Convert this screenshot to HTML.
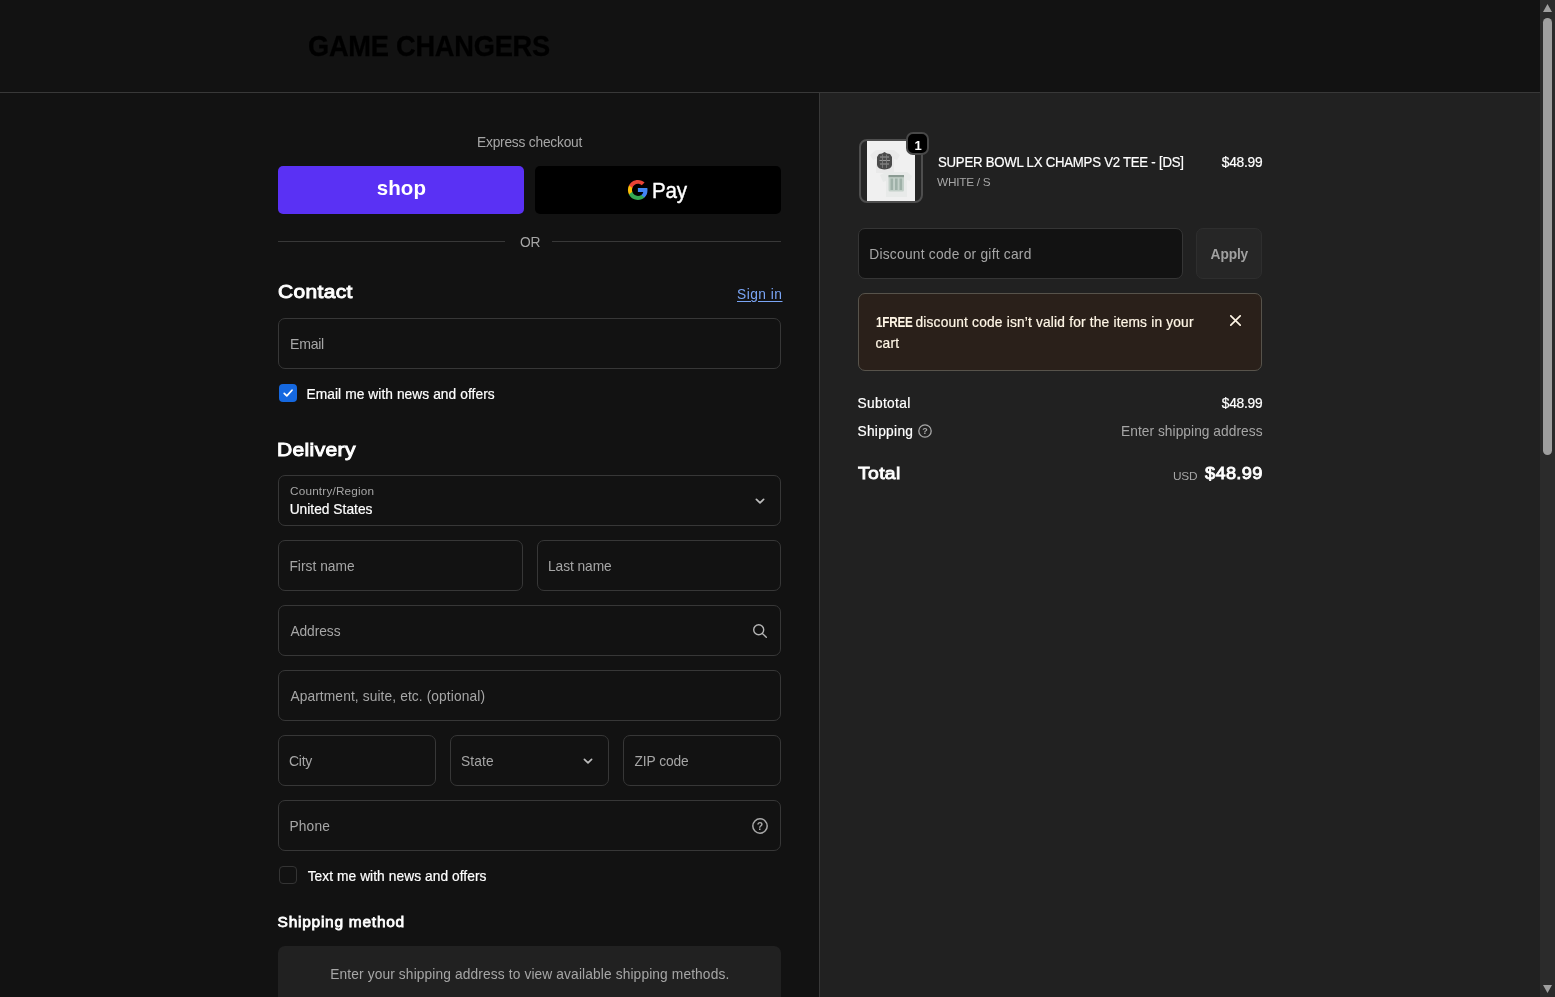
<!DOCTYPE html>
<html lang="en">
<head>
<meta charset="utf-8">
<title>Checkout - GAME CHANGERS</title>
<style>
*{box-sizing:border-box;margin:0;padding:0}
html,body{width:1555px;height:997px;overflow:hidden;background:#121212;font-family:"Liberation Sans",sans-serif;color:#fff}
body{position:relative}
.abs,.t,.box,svg{position:absolute}
.t{display:block;font-weight:400;white-space:nowrap;transform-origin:0 50%;line-height:20px;font-size:14px;color:#fff}
.t b{font-weight:700}
.box{border:1px solid #373737;border-radius:7px;height:51px}
#hdr{left:0;top:0;width:1540px;height:93px;background:#121212;border-bottom:1px solid #383838}
#side{left:819px;top:93px;width:721px;height:904px;background:#212121;border-left:1px solid #383838}
#sb{left:1540px;top:0;width:15px;height:997px;background:#2b2b2b}
#thumb{left:1543px;top:18px;width:9px;height:437px;background:#9f9f9f;border-radius:5px}
#txt{position:absolute;left:0;top:0;width:1555px;height:997px;will-change:transform}

</style>
</head>
<body>
<div id="txt">
<div class="abs" id="hdr"></div>
<div class="abs" id="side"></div>
<div class="abs" id="sb"></div>
<div class="abs" id="thumb"></div>
<svg style="left:1543px;top:4px" width="9" height="8" viewBox="0 0 9 8"><path d="M4.5 0 L9 8 H0 Z" fill="#9f9f9f"/></svg>
<svg style="left:1543px;top:985px" width="9" height="8" viewBox="0 0 9 8"><path d="M0 0 H9 L4.5 8 Z" fill="#9f9f9f"/></svg>

<!-- express buttons -->
<div class="abs" style="left:278px;top:166px;width:246px;height:48px;background:#5a31f4;border-radius:5px"></div>
<div class="abs" style="left:535px;top:166px;width:246px;height:48px;background:#000;border-radius:5px"></div>
<svg style="left:627.100px;top:179.100px" width="21.800" height="21.800" viewBox="0 0 48 48">
<path fill="#4285F4" d="M45.1 24.5c0-1.6-.1-3.100-.4-4.500H24v8.500h11.800c-.5 2.700-2.100 5.100-4.400 6.600v5.500h7.100c4.200-3.800 6.600-9.500 6.600-16.100z"/>
<path fill="#34A853" d="M24 46c5.900 0 10.900-2 14.500-5.300l-7.100-5.500c-2 1.300-4.500 2.100-7.400 2.100-5.700 0-10.500-3.800-12.300-9H4.400v5.700C8 41.100 15.400 46 24 46z"/>
<path fill="#FBBC05" d="M11.700 28.300c-.4-1.300-.7-2.800-.7-4.300s.3-2.900.7-4.300V14H4.400C2.900 17 2 20.400 2 24s.9 7 2.400 10l7.300-5.700z"/>
<path fill="#EA4335" d="M24 10.700c3.200 0 6.100 1.100 8.400 3.300l6.300-6.300C34.900 4.200 29.900 2 24 2 15.400 2 8 6.900 4.400 14l7.300 5.700c1.800-5.200 6.600-9 12.300-9z"/>
</svg>
<div class="abs" style="left:278px;top:241px;width:227px;height:1px;background:#383838"></div>
<div class="abs" style="left:552px;top:241px;width:229px;height:1px;background:#383838"></div>

<!-- form boxes -->
<div class="box" style="left:278px;top:318px;width:503px"></div>
<div class="abs" style="left:279px;top:384px;width:18px;height:18px;border-radius:4px;background:#1568e0"></div>
<svg style="left:282px;top:387px" width="12" height="12" viewBox="0 0 12 12"><path d="M2.2 6.300 L4.800 8.900 L10 3.200" fill="none" stroke="#fff" stroke-width="1.700" stroke-linecap="round" stroke-linejoin="round"/></svg>
<div class="box" style="left:278px;top:475px;width:503px"></div>
<svg style="left:754px;top:496.5px" width="12" height="8" viewBox="0 0 12 8"><path d="M2.400 2.400 L6 5.800 L9.600 2.400" fill="none" stroke="#bcbcbc" stroke-width="1.700" stroke-linecap="round" stroke-linejoin="round"/></svg>
<div class="box" style="left:278px;top:540px;width:245px"></div>
<div class="box" style="left:537px;top:540px;width:244px"></div>
<div class="box" style="left:278px;top:605px;width:503px"></div>
<svg style="left:753px;top:624px" width="14" height="14" viewBox="0 0 14 14"><circle cx="5.700" cy="5.700" r="5" fill="none" stroke="#b5b5b5" stroke-width="1.400"/><path d="M9.400 9.400 L13.300 13.300" stroke="#b5b5b5" stroke-width="1.400" stroke-linecap="round"/></svg>
<div class="box" style="left:278px;top:670px;width:503px"></div>
<div class="box" style="left:278px;top:735px;width:158px"></div>
<div class="box" style="left:450px;top:735px;width:159px"></div>
<svg style="left:582px;top:756.8px" width="12" height="8" viewBox="0 0 12 8"><path d="M2.400 2.400 L6 5.800 L9.600 2.400" fill="none" stroke="#bcbcbc" stroke-width="1.700" stroke-linecap="round" stroke-linejoin="round"/></svg>
<div class="box" style="left:623px;top:735px;width:158px"></div>
<div class="box" style="left:278px;top:800px;width:503px"></div>
<svg style="left:752px;top:818px" width="16" height="16" viewBox="0 0 16 16"><circle cx="8" cy="8" r="7.200" fill="none" stroke="#a8a8a8" stroke-width="1.500"/><text x="8" y="11.800" text-anchor="middle" font-family="Liberation Sans, sans-serif" font-weight="700" font-size="10.500" fill="#a8a8a8">?</text></svg>
<div class="abs" style="left:279px;top:866px;width:18px;height:18px;border-radius:4px;border:1px solid #343434"></div>
<div class="abs" style="left:278px;top:946px;width:503px;height:60px;border-radius:7px;background:#212121"></div>

<!-- order summary -->
<div class="abs" style="left:859px;top:139px;width:64px;height:64px;border:2px solid #4e4e4e;border-radius:8px;overflow:hidden;background:#252525"><div class="abs" style="left:6px;top:0;width:48px;height:60px;background:#f0f0f0"></div>
<svg style="left:6px;top:0" width="48" height="60" viewBox="0 0 48 60">
<path d="M3 14 L9 9 H27 L33 14 L30 19 L27 18 V32 H9 V18 L6 19 Z" fill="#e9e9e9"/>
<path d="M13 34 L19 31 H40 L45 35 L43 40 L40 39 V56 H19 V40 L16 41 Z" fill="#e8eae9"/>
<path d="M17.500 11 L20 12.500 L23 13 L25 16 L25 24 Q24.500 28 17.500 28.500 Q10.500 28 10 24 L10 16 L12 13 L15 12.500 Z" fill="#4b4b4b"/>
<path d="M13 16 H22 M12.500 19.500 H23 M13 23 H22" stroke="#9a9a9a" stroke-width="1.100" fill="none"/>
<path d="M15.500 13.500 V27 M19.500 13.500 V27" stroke="#7d7d7d" stroke-width=".9" fill="none"/>
<rect x="21.500" y="34" width="15.500" height="16.500" rx="1.500" fill="#c3d0c9"/>
<rect x="21.500" y="34" width="15.500" height="2.200" fill="#8b9b93"/>
<rect x="23.500" y="37.500" width="2.600" height="11.500" fill="#9fb1a8"/><rect x="28" y="37.500" width="2.600" height="11.500" fill="#9fb1a8"/><rect x="32.500" y="37.500" width="2.600" height="11.500" fill="#9fb1a8"/>
</svg></div>
<div class="abs" style="left:906px;top:132px;width:23px;height:23px;border:2px solid #484848;border-radius:7px;background:#000"></div>
<div class="abs" style="left:858px;top:228px;width:325px;height:51px;border:1px solid #353535;border-radius:7px;background:#121212"></div>
<div class="abs" style="left:1196px;top:228px;width:66px;height:51px;border:1px solid #2e2e2e;border-radius:7px;background:#262626"></div>
<div class="abs" style="left:858px;top:293px;width:404px;height:78px;border:1px solid #57534b;border-radius:7px;background:#2a201a"></div>
<svg style="left:1229.600px;top:314.600px" width="11" height="11" viewBox="0 0 11 11"><path d="M0.800 0.800 L10.200 10.200 M10.200 0.800 L0.800 10.200" stroke="#fff6e6" stroke-width="1.650" stroke-linecap="round"/></svg>
<svg style="left:918px;top:424px" width="14" height="14" viewBox="0 0 14 14"><circle cx="7" cy="7" r="6.200" fill="none" stroke="#a8a8a8" stroke-width="1.300"/><text x="7" y="10.300" text-anchor="middle" font-family="Liberation Sans, sans-serif" font-weight="700" font-size="9" fill="#a8a8a8">?</text></svg>

<h1 class="t" style="left:308.37px;top:36.00px;font-size:30px;font-weight:700;color:#000;letter-spacing:-0.250px;transform:scaleX(0.9068);-webkit-text-stroke:0.3px #000;">GAME CHANGERS</h1>
<span class="t" style="left:477.00px;top:133.00px;font-size:13.75px;color:#a6a6a6;letter-spacing:-0.210px;">Express checkout</span>
<span class="t" style="left:376.77px;top:178.00px;font-size:20.5px;font-weight:700;letter-spacing:0.087px;">shop</span>
<span class="t" style="left:651.94px;top:181.00px;font-size:22px;letter-spacing:-0.250px;transform:scaleX(0.9368);-webkit-text-stroke:0.4px #fff;">Pay</span>
<span class="t" style="left:519.90px;top:233.00px;font-size:13.75px;color:#a6a6a6;letter-spacing:-0.250px;transform:scaleX(1.0021);">OR</span>
<h2 class="t" style="left:277.90px;top:282.00px;font-size:18.8px;letter-spacing:0.300px;transform:scaleX(1.1168);-webkit-text-stroke:0.94px;">Contact</h2>
<a class="t" style="left:737.00px;top:285.00px;font-size:13.75px;color:#7aa5f5;letter-spacing:0.492px;text-decoration:underline;text-underline-offset:2px;">Sign in</a>
<label class="t" style="left:289.62px;top:335.00px;font-size:13.75px;color:#a6a6a6;letter-spacing:-0.250px;transform:scaleX(1.0254);">Email</label>
<label class="t" style="left:306.53px;top:385.00px;font-size:13.75px;letter-spacing:0.069px;-webkit-text-stroke:0.2px;">Email me with news and offers</label>
<h2 class="t" style="left:276.86px;top:440.00px;font-size:18.8px;letter-spacing:0.300px;transform:scaleX(1.1214);-webkit-text-stroke:0.94px;">Delivery</h2>
<label class="t" style="left:290.07px;top:481.00px;font-size:11.75px;color:#a6a6a6;letter-spacing:0.180px;">Country/Region</label>
<span class="t" style="left:289.64px;top:500.00px;font-size:13.75px;letter-spacing:0.022px;-webkit-text-stroke:0.2px;">United States</span>
<label class="t" style="left:289.43px;top:557.00px;font-size:13.75px;color:#a6a6a6;letter-spacing:0.034px;">First name</label>
<label class="t" style="left:548.00px;top:557.00px;font-size:13.75px;color:#a6a6a6;letter-spacing:-0.066px;">Last name</label>
<label class="t" style="left:290.40px;top:622.00px;font-size:13.75px;color:#a6a6a6;letter-spacing:-0.049px;">Address</label>
<label class="t" style="left:290.40px;top:687.00px;font-size:13.75px;color:#a6a6a6;letter-spacing:0.110px;">Apartment, suite, etc. (optional)</label>
<label class="t" style="left:289.41px;top:752.00px;font-size:13.75px;color:#a6a6a6;letter-spacing:-0.250px;transform:scaleX(1.0195);">City</label>
<label class="t" style="left:461.00px;top:752.00px;font-size:13.75px;color:#a6a6a6;letter-spacing:0.145px;">State</label>
<label class="t" style="left:634.57px;top:752.00px;font-size:13.75px;color:#a6a6a6;letter-spacing:-0.094px;">ZIP code</label>
<label class="t" style="left:289.43px;top:817.00px;font-size:13.75px;color:#a6a6a6;letter-spacing:0.184px;">Phone</label>
<label class="t" style="left:307.67px;top:867.00px;font-size:13.75px;letter-spacing:0.064px;-webkit-text-stroke:0.2px;">Text me with news and offers</label>
<h2 class="t" style="left:277.62px;top:912.00px;font-size:15.5px;letter-spacing:0.733px;-webkit-text-stroke:0.78px;">Shipping method</h2>
<p class="t" style="left:330.28px;top:965.00px;font-size:13.75px;color:#a6a6a6;letter-spacing:0.123px;">Enter your shipping address to view available shipping methods.</p>
<span class="t" style="left:937.66px;top:153.00px;font-size:13.75px;letter-spacing:-0.250px;transform:scaleX(0.9601);-webkit-text-stroke:0.2px;">SUPER BOWL LX CHAMPS V2 TEE - [DS]</span>
<p class="t" style="left:937.46px;top:172.00px;font-size:11.75px;color:#a6a6a6;letter-spacing:-0.250px;transform:scaleX(1.0043);">WHITE / S</p>
<span class="t" style="left:1221.74px;top:153.00px;font-size:13.75px;letter-spacing:-0.240px;-webkit-text-stroke:0.2px;">$48.99</span>
<span class="t" style="left:914.60px;top:136.00px;font-size:13px;font-weight:700;">1</span>
<span class="t" style="left:869.28px;top:245.00px;font-size:13.75px;color:#a6a6a6;letter-spacing:0.246px;">Discount code or gift card</span>
<span class="t" style="left:1210.60px;top:245.00px;font-size:13.75px;font-weight:700;color:#a0a0a0;letter-spacing:-0.146px;">Apply</span>
<strong class="t" style="left:875.61px;top:313.00px;font-size:13.75px;font-weight:700;color:#fff6e6;letter-spacing:-0.250px;transform:scaleX(0.8504);">1FREE</strong>
<p class="t" style="left:915.48px;top:313.00px;font-size:13.75px;color:#fff6e6;letter-spacing:0.179px;-webkit-text-stroke:0.2px;">discount code isn’t valid for the items in your</p>
<p class="t" style="left:875.47px;top:334.00px;font-size:13.75px;color:#fff6e6;letter-spacing:0.203px;-webkit-text-stroke:0.2px;">cart</p>
<span class="t" style="left:857.46px;top:394.00px;font-size:13.75px;letter-spacing:0.326px;-webkit-text-stroke:0.2px;">Subtotal</span>
<span class="t" style="left:1221.74px;top:394.00px;font-size:13.75px;letter-spacing:-0.240px;-webkit-text-stroke:0.2px;">$48.99</span>
<span class="t" style="left:857.46px;top:422.00px;font-size:13.75px;letter-spacing:0.287px;-webkit-text-stroke:0.2px;">Shipping</span>
<span class="t" style="left:1121.00px;top:422.00px;font-size:13.75px;color:#a6a6a6;letter-spacing:0.043px;">Enter shipping address</span>
<strong class="t" style="left:858.00px;top:464.00px;font-size:16.7px;letter-spacing:0.300px;transform:scaleX(1.1597);-webkit-text-stroke:0.83px;">Total</strong>
<span class="t" style="left:1173.00px;top:466.00px;font-size:11.75px;color:#a6a6a6;letter-spacing:-0.250px;transform:scaleX(1.0092);">USD</span>
<strong class="t" style="left:1205.00px;top:464.00px;font-size:16.7px;letter-spacing:0.300px;transform:scaleX(1.0912);-webkit-text-stroke:0.83px;">$48.99</strong>
</div>
</body>
</html>
